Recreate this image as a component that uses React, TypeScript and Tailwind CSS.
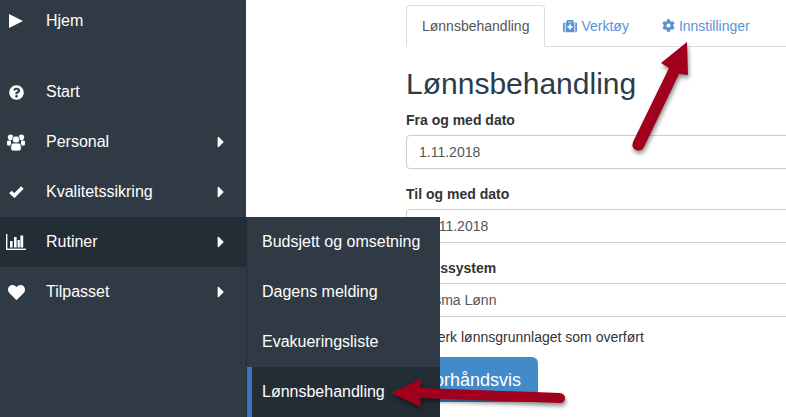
import type React from "react"
import { FaCaretRight, FaCog, FaHeart, FaMedkit, FaQuestionCircle } from "react-icons/fa"

interface NavItem {
  label: string
  icon: React.ReactNode
  hasSub?: boolean
  active?: boolean
}

const PlayIcon = () => (
  <svg width="14" height="14" viewBox="0 0 14 14" fill="#fff">
    <polygon points="0,0 14,7 0,14" />
  </svg>
)

const UsersIcon = () => (
  <svg width="18" height="17" viewBox="0 0 18 17" fill="#fff">
    <circle cx="3.6" cy="3.2" r="2.8" />
    <circle cx="14.4" cy="3.2" r="2.8" />
    <path d="M0 7.5 Q0 6.5 1.5 6.5 L4 6.5 L4 11.5 L1 11.5 Q0 11.5 0 10 Z" />
    <path d="M18 7.5 Q18 6.5 16.5 6.5 L14 6.5 L14 11.5 L17 11.5 Q18 11.5 18 10 Z" />
    <circle cx="9" cy="5.6" r="3.7" stroke="#2f3a44" strokeWidth="0.8" />
    <path d="M3.8 12 Q3.8 9.2 6 9 L12 9 Q14.2 9.2 14.2 12 L14.2 15 Q14.2 17 12 17 L6 17 Q3.8 17 3.8 15 Z" stroke="#2f3a44" strokeWidth="0.8" />
  </svg>
)

const CheckIcon = () => (
  <svg width="15" height="12" viewBox="0 0 15 12" fill="none">
    <path d="M1.4 6 L5.4 9.6 L13.4 1.6" stroke="#fff" strokeWidth="3.6" />
  </svg>
)

const ChartIcon = () => (
  <svg width="20" height="16" viewBox="0 0 20 16" fill="#fff">
    <rect x="0" y="0" width="1.4" height="16" />
    <rect x="0" y="14.6" width="20" height="1.4" />
    <rect x="4" y="7" width="2.6" height="6.5" />
    <rect x="8" y="3" width="2.6" height="10.5" />
    <rect x="11.6" y="6" width="2.2" height="7.5" />
    <rect x="14.4" y="1.5" width="2.8" height="12" />
  </svg>
)

const navItems: NavItem[] = [
  { label: "Start", icon: <FaQuestionCircle className="text-[15px]" /> },
  { label: "Personal", icon: <UsersIcon />, hasSub: true },
  { label: "Kvalitetssikring", icon: <CheckIcon />, hasSub: true },
  { label: "Rutiner", icon: <ChartIcon />, hasSub: true, active: true },
  { label: "Tilpasset", icon: <FaHeart className="text-[17px]" />, hasSub: true },
]

const subItems = ["Budsjett og omsetning", "Dagens melding", "Evakueringsliste"]

const NavRow = ({ item }: { item: NavItem }) => (
  <div className={`flex h-[50px] items-center text-white ${item.active ? "bg-[#232d36]" : ""}`}>
    <span className="flex w-[32px] justify-center">{item.icon}</span>
    <span className="ml-[14px] flex-1 text-base">{item.label}</span>
    {item.hasSub && <FaCaretRight className="mr-4 text-[18px]" />}
  </div>
)

const Field = ({ label, value, pad, last }: { label: string; value: string; pad: string; last?: boolean }) => (
  <div className={last ? "mb-[10px]" : "mb-[15px]"}>
    <label className="mb-[5px] block text-sm leading-5 font-bold text-[#333]">{label}</label>
    <div className={`flex h-[34px] w-[420px] items-center rounded border border-[#ccc] bg-white text-sm text-[#555] ${pad}`}>
      {value}
    </div>
  </div>
)

export default function App() {
  return (
    <div className="relative flex h-[417px] w-[786px] overflow-hidden bg-white font-['Liberation_Sans',Arial,sans-serif]">
      <aside className="w-[246px] shrink-0 bg-[#2f3a44]">
        <div className="mt-[-4px] mb-5 flex h-[50px] items-center text-white">
          <span className="flex w-[32px] justify-center">
            <PlayIcon />
          </span>
          <span className="ml-[14px] text-base">Hjem</span>
        </div>
        <div className="pt-px">
          {navItems.map((item) => (
            <NavRow key={item.label} item={item} />
          ))}
        </div>
      </aside>

      <main className="min-w-0 flex-1 pt-[5px] pl-[160px]">
        <div className="flex h-[42px] w-[420px] border-b border-[#ddd] text-sm">
          <div className="h-[42px] rounded-t border border-[#ddd] border-b-white bg-white px-[15px] leading-[40px] text-[#555]">
            Lønnsbehandling
          </div>
          <div className="ml-[2px] flex items-center gap-1 pr-[15px] pl-4 text-[#5a93d3]">
            <FaMedkit className="text-sm" />
            Verktøy
          </div>
          <div className="ml-[3px] flex items-center gap-1 px-[15px] text-[#5a93d3]">
            <FaCog className="text-[13px]" />
            Innstillinger
          </div>
        </div>
        <h1 className="mt-5 mb-[10px] text-[30px] leading-[33px] font-normal text-[#2c3b4a]">Lønnsbehandling</h1>
        <Field label="Fra og med dato" value="1.11.2018" pad="pl-3" />
        <Field label="Til og med dato" value="1.11.2018" pad="pl-5" />
        <Field label="Lønnssystem" value="Visma Lønn" pad="pl-[15px]" last />
        <div className="mb-[10px] flex h-5 items-center text-sm text-[#333]">
          <span className="ml-[1px] h-[13px] w-[13px] rounded-sm border border-[#767676]" />
          <span className="ml-[6px]">Merk lønnsgrunnlaget som overført</span>
        </div>
        <button className="h-[45px] w-[132px] rounded-md bg-[#428bca] text-lg text-white">Forhåndsvis</button>
      </main>

      {/* flyout from Rutiner */}
      <div className="absolute top-[217px] left-[246px] w-[194px] border-l border-[#232d36] bg-[#2f3a44] text-base text-white">
        {subItems.map((label) => (
          <div key={label} className="flex h-[50px] items-center pl-[15px]">
            {label}
          </div>
        ))}
        <div className="flex h-[50px] items-center border-l-[5px] border-[#3a75c0] bg-[#232d36] pl-[10px]">
          Lønnsbehandling
        </div>
      </div>

      {/* annotation arrows */}
      <svg className="pointer-events-none absolute inset-0 drop-shadow-[1px_3px_2px_rgba(0,0,0,0.45)]" width="786" height="417" viewBox="0 0 786 417">
        <path
          d="M687 42 L661 63 L669 68 L633 142 Q631 148 636 150 Q641 152 644 147 L679 74 L688 75 Z"
          fill="#a0001e"
        />
        <path
          d="M391 393 L421 379 L420 388 L560 393 Q565 394 565 398 Q565 403 560 403 L420 398 L421 407 Z"
          fill="#a0001e"
        />
      </svg>
    </div>
  )
}
